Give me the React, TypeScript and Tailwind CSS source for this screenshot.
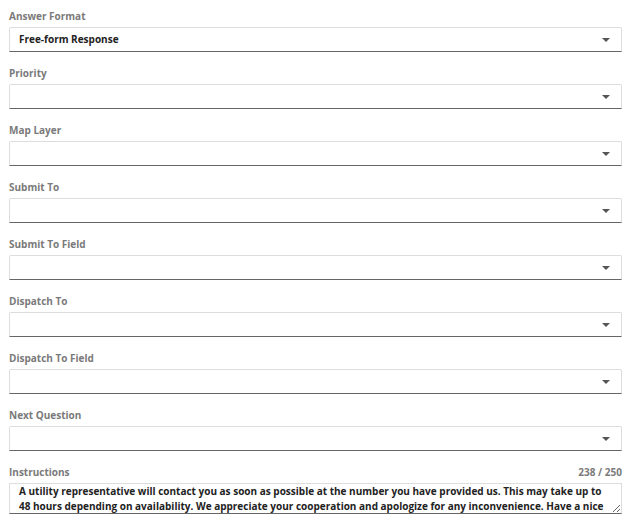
import React from "react";

const fields = [
  { label: "Answer Format", value: "Free-form Response" },
  { label: "Priority", value: "" },
  { label: "Map Layer", value: "" },
  { label: "Submit To", value: "" },
  { label: "Submit To Field", value: "" },
  { label: "Dispatch To", value: "" },
  { label: "Dispatch To Field", value: "" },
  { label: "Next Question", value: "" },
];

const text =
  "A utility representative will contact you as soon as possible at the number you have provided us. This may take up to 48 hours depending on availability. We appreciate your cooperation and apologize for any inconvenience. Have a nice day.";

function Caret() {
  return (
    <svg width="8" height="4" viewBox="0 0 8 4" className="block">
      <path d="M0 0 L8 0 L4 4 Z" fill="#555" />
    </svg>
  );
}

export default function App() {
  return (
    <div
      className="w-[627px] h-[525px] bg-white pt-[8px] pl-[9px] pr-[5px] overflow-hidden"
      style={{ fontFamily: '"Open Sans", "Liberation Sans", sans-serif' }}
    >
      {fields.map((f) => (
        <div key={f.label} className="mb-[13px]">
          <div className="h-[16px] leading-[16px] text-[10px] font-bold text-[#7a7a7a] mb-[3px]">
            {f.label}
          </div>
          <div className="h-[25px] flex items-center justify-between border border-[#ddd] border-b-[#666] rounded-tr-[2px] rounded-tl-[2px] pl-[9px] pr-[11px]">
            <span className="text-[10px] font-bold text-[#222]">{f.value}</span>
            <Caret />
          </div>
        </div>
      ))}
      <div>
        <div className="h-[16px] leading-[16px] text-[10px] font-bold text-[#7a7a7a] mb-[3px] flex justify-between">
          <span>Instructions</span>
          <span>238 / 250</span>
        </div>
        <textarea
          readOnly
          defaultValue={text}
          className="block w-full h-[31px] border border-[#ddd] border-b-[#666] pl-[9px] pr-[12px] pt-0 text-[10px] leading-[15px] font-bold text-[#222] resize-y overflow-hidden outline-none"
          style={{ fontFamily: '"Open Sans", "Liberation Sans", sans-serif' }}
        />
      </div>
    </div>
  );
}
